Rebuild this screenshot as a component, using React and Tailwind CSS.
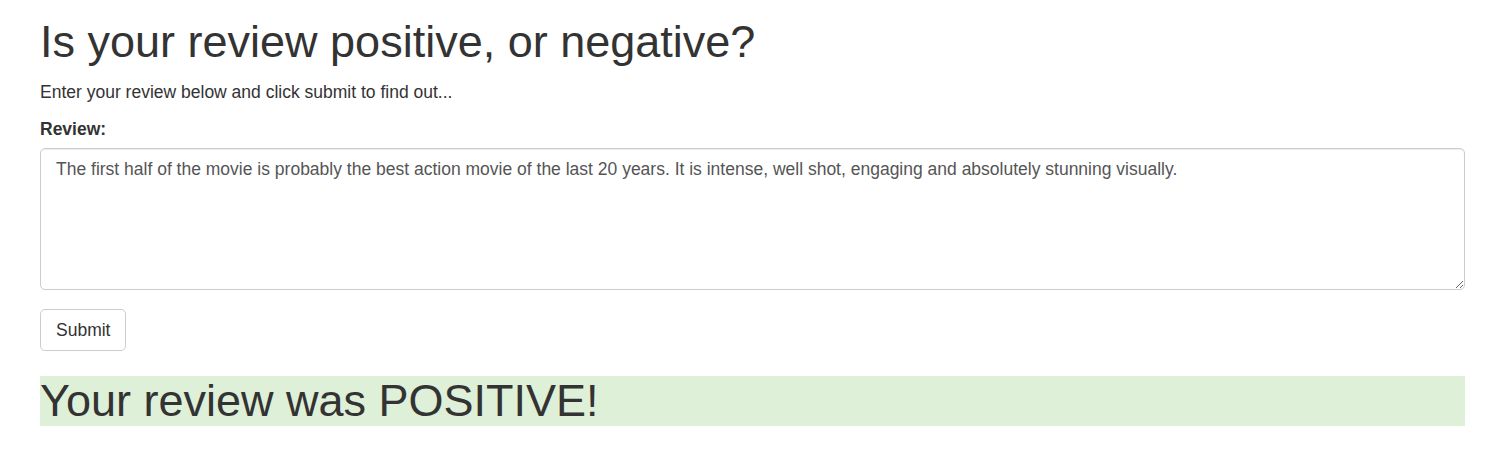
export default function App() {
  return (
    <div className="min-h-[463px] bg-white pl-[40px] pr-[24px] pt-[17px] font-['Liberation_Sans',Arial,sans-serif] text-[17.5px] leading-[25px] text-[#333]">
      <h1 className="m-0 text-[45px] leading-[1.1] font-normal">Is your review positive, or negative?</h1>
      <p className="mt-[13px] mb-[12.5px]">Enter your review below and click submit to find out...</p>
      <form onSubmit={(e) => e.preventDefault()}>
        <div className="mb-[19px]">
          <label htmlFor="review" className="mb-[6px] block font-bold">Review:</label>
          <textarea
            id="review"
            defaultValue="The first half of the movie is probably the best action movie of the last 20 years. It is intense, well shot, engaging and absolutely stunning visually."
            className="block h-[142px] w-full rounded-[5px] border border-[#ccc] px-[15px] py-[7.5px] text-[17.5px] leading-[25px] text-[#555] shadow-[inset_0_1px_1px_rgba(0,0,0,0.075)] outline-none"
          />
        </div>
        <button
          type="submit"
          className="h-[42px] rounded-[5px] border border-[#ccc] bg-white px-[15px] text-[17.5px] leading-[25px] text-[#333]"
        >
          Submit
        </button>
      </form>
      <h1 className="mt-[25px] bg-[#dff0d8] text-[45px] leading-[1.1] font-normal">Your review was POSITIVE!</h1>
    </div>
  );
}
